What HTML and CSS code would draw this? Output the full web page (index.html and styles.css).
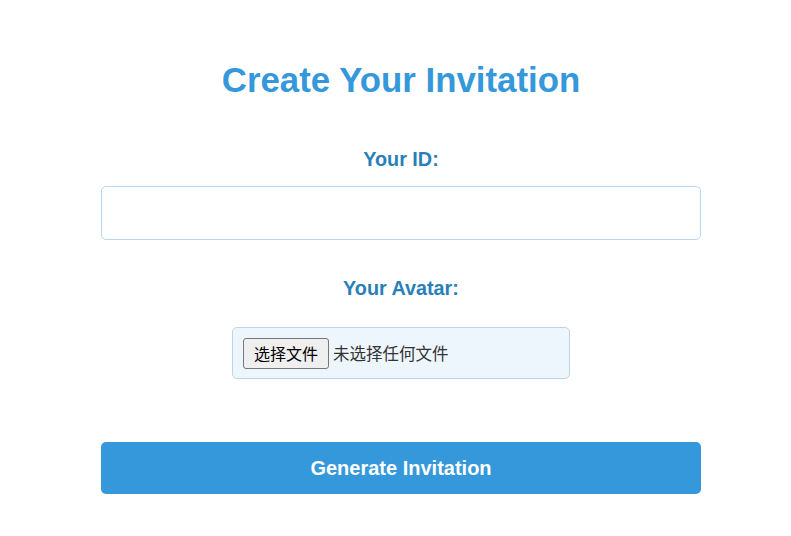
FILE: index.html
```html
<!DOCTYPE html>
<html lang="en">
<head>
<meta charset="utf-8">
<title>Create Your Invitation</title>
<link rel="stylesheet" href="styles.css">
</head>
<body>
<main class="page">
  <h1 class="title">Create Your Invitation</h1>
  <form class="form">
    <label class="label label-id" for="uid">Your ID:</label>
    <input class="text-input" id="uid" type="text">
    <span class="label label-avatar">Your Avatar:</span>
    <div class="file-box">
      <button type="button" class="file-btn">选择文件</button>
      <span class="file-name">未选择任何文件</span>
    </div>
    <button type="button" class="submit">Generate Invitation</button>
  </form>
</main>
</body>
</html>
```
FILE: styles.css
```css
html, body {
  margin: 0;
  padding: 0;
  background: #ffffff;
}
body {
  font-family: "Liberation Sans", Arial, sans-serif;
  padding-left: 11px;
}
.page {
  width: 600px;
  margin: 0 auto;
  padding-top: 60px;
  display: flex;
  flex-direction: column;
  align-items: center;
}
.title {
  margin: 0;
  font-size: 34.8px;
  font-weight: 700;
  color: #3498db;
  line-height: 40px;
  text-align: center;
}
.form {
  width: 100%;
  display: flex;
  flex-direction: column;
  align-items: center;
  margin-top: 48px;
}
.label {
  display: block;
  font-size: 19.8px;
  font-weight: 700;
  color: #2980b9;
  line-height: 22px;
}
.text-input {
  box-sizing: border-box;
  width: 100%;
  height: 54px;
  margin-top: 16px;
  border: 1px solid #b8d8f1;
  border-radius: 5px;
  background: #ffffff;
  font-size: 16px;
  padding: 0 12px;
  outline: none;
}
.label-avatar {
  margin-top: 37px;
}
.file-box {
  box-sizing: border-box;
  width: 338px;
  height: 52px;
  margin-top: 28px;
  padding: 0 10px;
  display: flex;
  align-items: center;
  gap: 4px;
  background: #eef6fd;
  border: 1px solid #b8d6ee;
  border-radius: 5px;
}
.file-btn {
  box-sizing: border-box;
  height: 31px;
  width: 86px;
  padding: 0;
  font-family: "Noto Sans CJK SC", sans-serif;
  font-size: 16px;
  color: #000000;
  background: #efefef;
  border: 1px solid #767676;
  border-radius: 3px;
  line-height: 1;
}
.file-name {
  font-family: "Noto Sans CJK SC", sans-serif;
  font-size: 16.5px;
  color: #333333;
  line-height: 1;
}
.submit {
  width: 100%;
  height: 52px;
  margin-top: 63px;
  border: none;
  border-radius: 5px;
  background: #3498db;
  color: #ffffff;
  font-family: "Liberation Sans", Arial, sans-serif;
  font-size: 20px;
  font-weight: 700;
  cursor: pointer;
}
```
